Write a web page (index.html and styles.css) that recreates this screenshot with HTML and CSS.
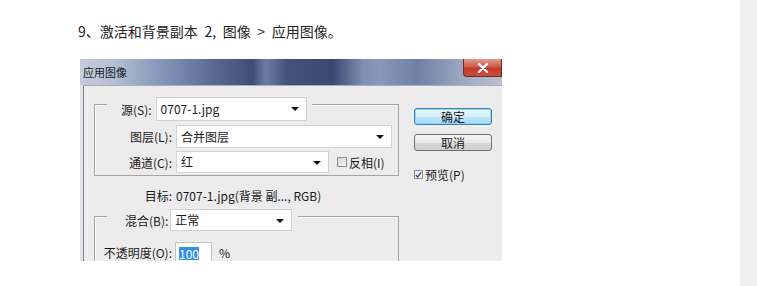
FILE: index.html
```html
<!DOCTYPE html>
<html lang="zh-CN">
  <head>
    <meta charset="UTF-8" />
    <title>应用图像</title>
    <link rel="stylesheet" href="styles.css">
  </head>
  <body>
    <div class="page">
      <main class="article">
        <p class="step">9、激活和背景副本 2, 图像 &gt; 应用图像。</p>

        <div class="dialog">
          <div class="titlebar">
            <span class="title">应用图像</span>
            <span class="close">
              <svg width="12" height="10" viewBox="0 0 12 10">
                <path d="M2 1 L10 9 M10 1 L2 9" stroke="#fff" stroke-width="2.4" stroke-linecap="round" />
              </svg>
            </span>
          </div>

          <div class="client">
            <div class="main-col">
              <div class="group">
                <div class="legend legend-source">
                  <span>源(S):</span>
                  <span class="select select-source">0707-1.jpg</span>
                </div>
                <div class="row row-layer">
                  <span class="label">图层(L):</span>
                  <span class="select select-layer">合并图层</span>
                </div>
                <div class="row row-channel">
                  <span class="label">通道(C):</span>
                  <span class="select select-channel">红</span>
                  <span class="check"></span>
                  <span class="check-text">反相(I)</span>
                </div>
              </div>

              <div class="row row-target">
                <span class="label">目标:</span>
                <span>0707-1.jpg(背景 副..., RGB)</span>
              </div>

              <div class="group group-blend">
                <div class="legend legend-blend">
                  <span>混合(B):</span>
                  <span class="select select-blend">正常</span>
                </div>
                <div class="row row-opacity">
                  <span class="label">不透明度(O):</span>
                  <span class="field"><span class="selected">100</span></span>
                  <span class="unit">%</span>
                </div>
              </div>
            </div>

            <div class="side-col">
              <span class="btn btn-default">确定</span>
              <span class="btn">取消</span>
              <div class="preview">
                <span class="check checked">
                  <svg width="8" height="8" viewBox="0 0 8 8">
                    <path d="M1 4 L3 6.5 L7 1" fill="none" stroke="#2a4f8f" stroke-width="1.6" />
                  </svg>
                </span>
                <span class="check-text">预览(P)</span>
              </div>
            </div>
          </div>
        </div>
      </main>
      <aside class="scroll"></aside>
    </div>
  </body>
</html>
```

FILE: styles.css
```css
* {
  margin: 0;
  padding: 0;
  box-sizing: border-box;
}

body {
  font-family: "Noto Sans CJK SC", "Noto Sans", sans-serif;
  background: #fff;
  color: #222;
}

.page {
  display: flex;
  height: 100vh;
}

.article {
  flex: 1;
  padding: 21px 0 0 78px;
  overflow: hidden;
}

.scroll {
  width: 17px;
  background: #efefef;
}

.step {
  font-size: 14px;
  line-height: 20px;
  word-spacing: 3.5px;
  color: #222;
  margin-bottom: 18px;
}

/* dialog screenshot */

.dialog {
  width: 422px;
  height: 202px;
  margin-left: 2px;
  background: #dfe3ea;
  overflow: hidden;
  display: flex;
  flex-direction: column;
  font-size: 12px;
  color: #1a1a1a;
}

.titlebar {
  height: 26px;
  flex-shrink: 0;
  display: flex;
  justify-content: space-between;
  background: linear-gradient(
    90deg,
    #c6cdd9 0%,
    #b3bfd4 8%,
    #8194b8 20%,
    #52628a 34%,
    #3f4e76 41%,
    #6b7da6 44%,
    #43527a 49%,
    #3a496f 60%,
    #7e8fb4 67%,
    #8898bb 71%,
    #6f80a6 80%,
    #a3aec5 92%,
    #b9c0cd 100%
  );
}

.title {
  font-size: 11px;
  line-height: 26px;
  padding-left: 3px;
  color: #141a26;
}

.close {
  width: 39px;
  height: 18px;
  display: flex;
  align-items: center;
  justify-content: center;
  background: linear-gradient(180deg, #e39a8d 0%, #d2594a 45%, #c03a28 55%, #c8503b 100%);
  border: 1px solid #6e2b24;
  border-top: none;
  border-radius: 0 0 0 4px;
}

.client {
  flex: 1;
  display: flex;
  margin-left: 3px;
  background: #ececec;
  border-top: 1px solid #a9b0bb;
  border-left: 1px solid #7f8389;
}

.main-col {
  padding-left: 10px;
}

.group {
  width: 305px;
  margin-top: 18px;
  padding-bottom: 2px;
  border: 1px solid #a3a3a3;
  box-shadow: inset 1px 1px 0 #fafafa;
}

.group-blend {
  margin-top: 11px;
  height: 60px;
}

.legend {
  display: flex;
  width: max-content;
  align-items: center;
  margin: -8px 0 0 12px;
  background: #ececec;
}

.legend-source {
  gap: 4px;
  padding: 0 5px 0 14px;
}

.legend-blend {
  gap: 2px;
  padding: 0 6px 0 18px;
}

.row {
  display: flex;
  align-items: center;
  gap: 4px;
}

.label {
  width: 77px;
  text-align: right;
}

.row-layer {
  margin-top: 4px;
}

.row-channel {
  margin-top: 3px;
}

.row-target {
  height: 20px;
  margin: 9px 0 0 1px;
}

.row-opacity {
  margin-top: 11px;
}

.select {
  position: relative;
  height: 23px;
  line-height: 21px;
  padding-left: 4px;
  background: #fff;
  border: 1px solid #d2d2d2;
}

.select::after {
  content: "";
  position: absolute;
  right: 7px;
  top: 9px;
  border-left: 4px solid transparent;
  border-right: 4px solid transparent;
  border-top: 4px solid #111;
}

.select-source {
  width: 151px;
  height: 24px;
  line-height: 22px;
}

.select-layer {
  width: 216px;
}

.select-channel {
  width: 153px;
  height: 22px;
  line-height: 20px;
}

.select-blend {
  width: 122px;
  height: 22px;
  line-height: 20px;
}

.check {
  width: 10px;
  height: 10px;
  margin-left: 4px;
  border: 1px solid #8f8f8f;
  background: linear-gradient(135deg, #d4d4d4, #f6f6f6);
  display: flex;
  align-items: center;
  justify-content: center;
}

.check-text {
  margin-left: -2px;
}

.field {
  width: 37px;
  height: 20px;
  margin-left: -1px;
  padding: 4px 0 0 3px;
  background: #fff;
  border: 1px solid #c4c4c4;
}

.selected {
  display: block;
  width: 20px;
  line-height: 13px;
  background: #3390e8;
  color: #fff;
}

.unit {
  margin-left: 3px;
}

.side-col {
  display: flex;
  flex-direction: column;
  margin-left: 15px;
  padding-top: 22px;
}

.btn {
  width: 78px;
  height: 17px;
  line-height: 15px;
  text-align: center;
  border: 1px solid #707070;
  border-radius: 3px;
  background: linear-gradient(180deg, #f4f4f4 0%, #e8e8e8 50%, #d8d8d8 51%, #cfcfcf 100%);
}

.btn + .btn {
  margin-top: 9px;
}

.btn-default {
  border-color: #3c7fb1;
  background: linear-gradient(180deg, #eaf6fd 0%, #d9f0fc 50%, #bee6fd 51%, #a7d9f5 100%);
  box-shadow: inset 0 0 0 1px #8fd4f5;
}

.preview {
  display: flex;
  align-items: center;
  gap: 4px;
  margin-top: 15px;
}

.preview .check {
  margin-left: 0;
  width: 9px;
  height: 9px;
  background: linear-gradient(135deg, #e4e8ef, #fafbfc);
}
```
